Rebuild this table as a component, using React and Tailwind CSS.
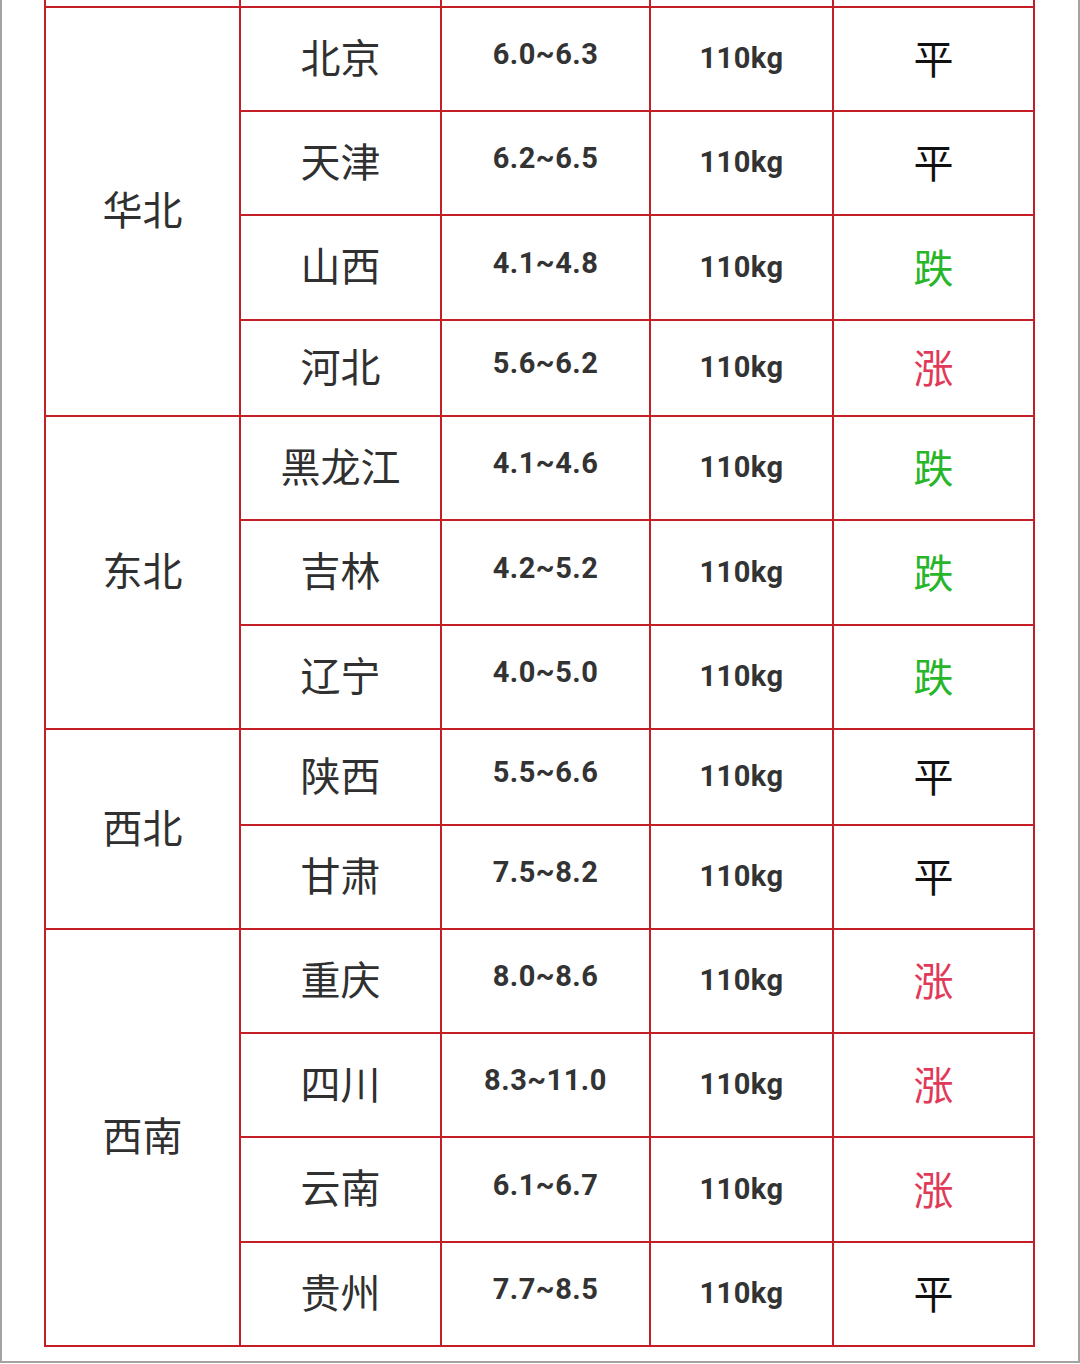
import React from 'react';

const regions = [
    {
        name: '华北',
        span: 'row-span-4',
        rows: [
            { city: '北京', price: '6.0~6.3', weight: '110kg', trend: '平' },
            { city: '天津', price: '6.2~6.5', weight: '110kg', trend: '平' },
            { city: '山西', price: '4.1~4.8', weight: '110kg', trend: '跌' },
            { city: '河北', price: '5.6~6.2', weight: '110kg', trend: '涨' },
        ],
    },
    {
        name: '东北',
        span: 'row-span-3',
        rows: [
            { city: '黑龙江', price: '4.1~4.6', weight: '110kg', trend: '跌' },
            { city: '吉林', price: '4.2~5.2', weight: '110kg', trend: '跌' },
            { city: '辽宁', price: '4.0~5.0', weight: '110kg', trend: '跌' },
        ],
    },
    {
        name: '西北',
        span: 'row-span-2',
        rows: [
            { city: '陕西', price: '5.5~6.6', weight: '110kg', trend: '平' },
            { city: '甘肃', price: '7.5~8.2', weight: '110kg', trend: '平' },
        ],
    },
    {
        name: '西南',
        span: 'row-span-4',
        rows: [
            { city: '重庆', price: '8.0~8.6', weight: '110kg', trend: '涨' },
            { city: '四川', price: '8.3~11.0', weight: '110kg', trend: '涨' },
            { city: '云南', price: '6.1~6.7', weight: '110kg', trend: '涨' },
            { city: '贵州', price: '7.7~8.5', weight: '110kg', trend: '平' },
        ],
    },
];

const trendColor = {
    '平': 'text-[#111111]',
    '跌': 'text-[#27b52a]',
    '涨': 'text-[#e03a58]',
};

const cjk = "font-['Noto_Sans_CJK_SC',sans-serif]";
const num = "font-['Roboto','Noto_Sans',sans-serif]";
const cell = 'border-r-2 border-b-2 border-[#c41f27] flex items-center justify-center';

const App = () => {
    return (
        <div className="w-[1080px] h-[1363px] bg-white border-l-2 border-r-2 border-b-2 border-[#a3a3a3] overflow-hidden">
            <div className="ml-[42px] w-fit grid grid-cols-[195px_201px_209px_183px_201px] grid-rows-[8px_104px_104px_105px_96px_104px_105px_104px_96px_104px_104px_104px_105px_104px] border-l-2 border-[#c41f27]">
                {/* top row, cut off by the screenshot */}
                <div className={cell}></div>
                <div className={cell}></div>
                <div className={cell}></div>
                <div className={cell}></div>
                <div className={cell}></div>

                {regions.map((r) => (
                    <React.Fragment key={r.name}>
                        <div className={`${cell} ${r.span} ${cjk} text-[40px] text-[#303030] pb-[7px]`}>{r.name}</div>
                        {r.rows.map((row) => (
                            <React.Fragment key={row.city}>
                                <div className={`${cell} ${cjk} text-[40px] text-[#303030] pb-[7px]`}>{row.city}</div>
                                <div className={`${cell} ${num} font-bold text-[29px] tracking-[0.5px] text-[#333333] pb-2`}>{row.price}</div>
                                <div className={`${cell} ${num} font-bold text-[29px] tracking-[0.5px] text-[#333333]`}>{row.weight}</div>
                                <div className={`${cell} ${cjk} text-[40px] pb-1 ${trendColor[row.trend]}`}>{row.trend}</div>
                            </React.Fragment>
                        ))}
                    </React.Fragment>
                ))}
            </div>
        </div>
    );
};

export default App;
